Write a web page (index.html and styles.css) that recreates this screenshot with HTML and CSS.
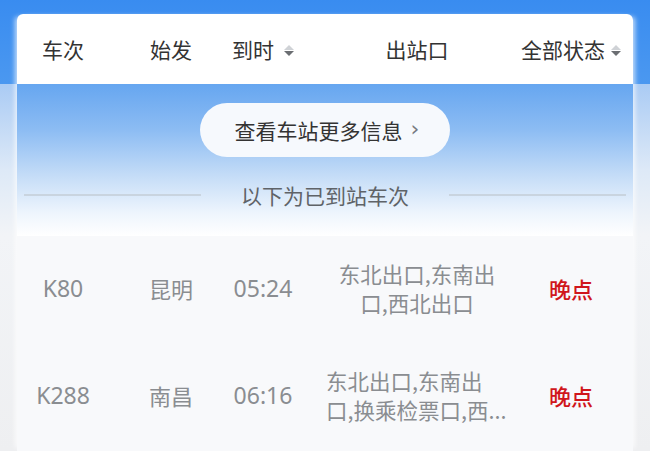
FILE: index.html
```html
<!DOCTYPE html>
<html lang="zh-CN">
<head>
<meta charset="utf-8">
<link rel="stylesheet" href="styles.css">
</head>
<body>
<div class="page">
  <div class="card">
    <div class="grid head">
      <div class="cell">车次</div>
      <div class="cell">始发</div>
      <div class="cell">到时<span class="sort"><i class="up"></i><i class="down"></i></span></div>
      <div class="cell">出站口</div>
      <div class="cell">全部状态<span class="sort sort-tight"><i class="up"></i><i class="down"></i></span></div>
    </div>
    <div class="banner">
      <div class="more">查看车站更多信息<span class="chev">›</span></div>
      <div class="divider"><span class="line"></span><span class="divtext">以下为已到站车次</span><span class="line"></span></div>
    </div>
    <div class="rows">
      <div class="grid row">
        <div class="cell num">K80</div>
        <div class="cell">昆明</div>
        <div class="cell num">05:24</div>
        <div class="cell"><div class="exit">东北出口,东南出口,西北出口</div></div>
        <div class="cell late">晚点</div>
      </div>
      <div class="grid row">
        <div class="cell num">K288</div>
        <div class="cell">南昌</div>
        <div class="cell num">06:16</div>
        <div class="cell"><div class="exit exit-left"><span class="ln">东北出口,东南出</span><span class="ln">口,换乘检票口,西...</span></div></div>
        <div class="cell late">晚点</div>
      </div>
    </div>
  </div>
</div>
</body>
</html>
```
FILE: styles.css
```css
html, body {
  margin: 0;
  padding: 0;
}
body {
  width: 650px;
  height: 451px;
  overflow: hidden;
  font-family: "Noto Sans CJK SC", "Noto Sans", sans-serif;
  background: linear-gradient(180deg, #398cf0 0px, #4b98f0 84px, #aacbf4 84px, #dde9f7 170px, #f2f4f7 235px, #eeeff1 100%);
}
.page {
  padding: 14px 17px 0;
}
.card {
  border-radius: 6px 6px 0 0;
  overflow: hidden;
  box-shadow: -5px 0 5px -3px rgba(255,255,255,0.7), 5px 0 5px -3px rgba(255,255,255,0.7);
}
.grid {
  display: grid;
  grid-template-columns: 92px 124px 60px 248px 60px;
  padding-right: 32px;
}
.cell {
  display: flex;
  align-items: center;
  justify-content: center;
  white-space: nowrap;
  min-width: 0;
}
.head {
  height: 70px;
  background: #ffffff;
  font-size: 21px;
  color: #333333;
}
.sort {
  display: inline-flex;
  flex-direction: column;
  gap: 1px;
  margin-left: 10px;
  margin-top: 3px;
}
.sort-tight {
  margin-left: 6px;
}
.sort i {
  display: block;
  width: 0;
  height: 0;
  border-left: 5px solid transparent;
  border-right: 5px solid transparent;
}
.sort .up {
  border-bottom: 5px solid #cfd2d6;
}
.sort .down {
  border-top: 5px solid #6b6e72;
}
.banner {
  height: 152px;
  background: linear-gradient(180deg, #66a6f0 0%, #8cbcf3 30%, #c4dcf7 60%, #eef5fd 85%, #ffffff 100%);
  display: flex;
  flex-direction: column;
  align-items: center;
}
.more {
  margin-top: 19px;
  width: 250px;
  height: 54px;
  border-radius: 27px;
  background: #f6f9fd;
  display: flex;
  align-items: center;
  justify-content: center;
  font-size: 21px;
  color: #333333;
  padding-left: 4px;
  box-sizing: border-box;
}
.chev {
  margin-left: 8px;
  font-size: 22px;
  color: #777a80;
  font-family: "DejaVu Sans", sans-serif;
  margin-top: -3px;
}
.divider {
  margin-top: 23px;
  width: 602px;
  display: flex;
  align-items: center;
  gap: 40px;
}
.line {
  flex: 1;
  height: 2px;
  background: #c9d4df;
}
.divtext {
  font-size: 21px;
  color: #5f6368;
}
.rows {
  background: #f8f9fb;
  height: 215px;
}
.row {
  height: 107px;
  font-size: 22px;
  color: #8a8d91;
}
.row .cell {
  padding-bottom: 3px;
}
.row .num {
  font-family: "Noto Sans", "Noto Sans CJK SC", sans-serif;
  font-size: 23px;
  padding-bottom: 4px;
}
.exit {
  width: 180px;
  white-space: normal;
  text-align: center;
  line-height: 29px;
  font-size: 21.5px;
}
.exit-left {
  text-align: left;
  margin-left: -2px;
}
.ln {
  display: block;
  white-space: nowrap;
}
.late {
  color: #d0161c;
  font-weight: 500;
}
```
